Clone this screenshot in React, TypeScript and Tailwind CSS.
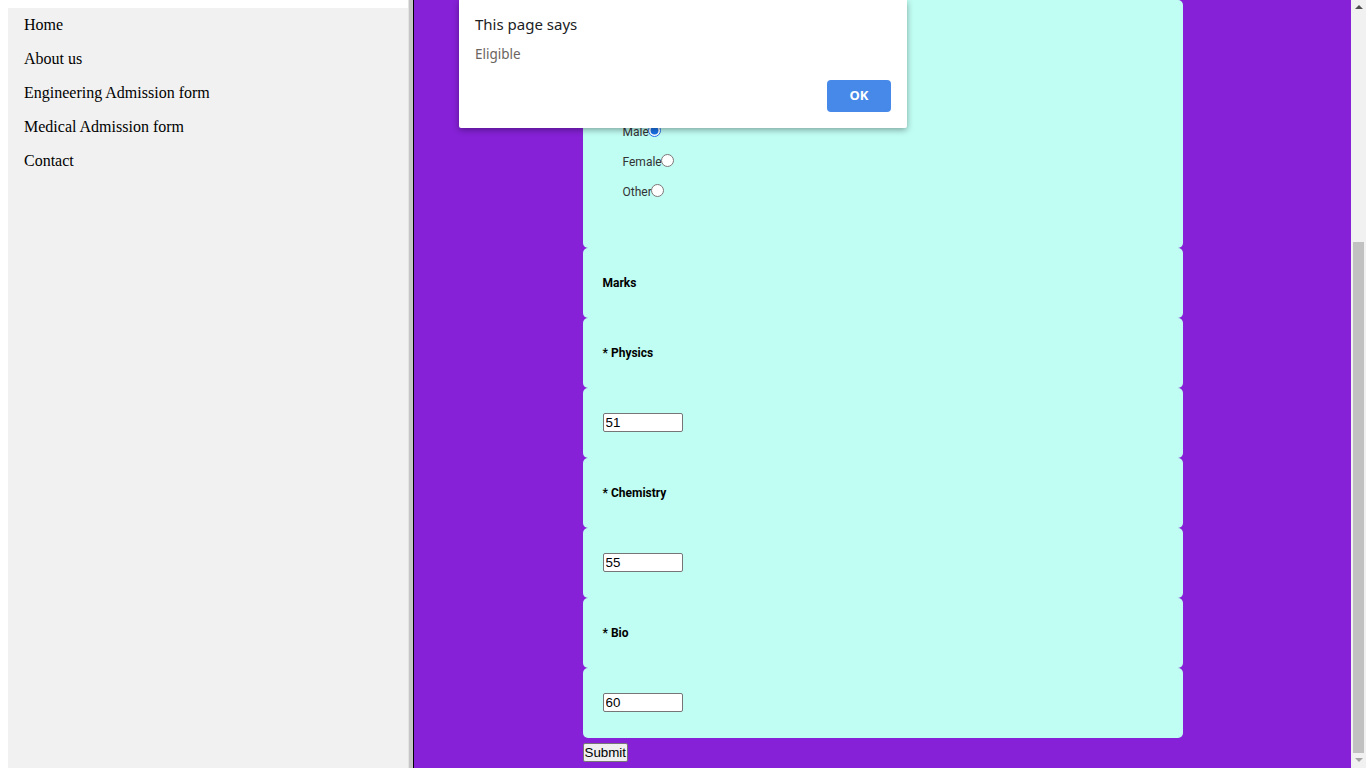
import React from "react";

const navItems = ["Home", "About us", "Engineering Admission form", "Medical Admission form", "Contact"];

function Row({ children }: { children: React.ReactNode }) {
  return (
    <div className="h-[70px] rounded-[5px] bg-[#c0fdf3] px-5 flex items-center">{children}</div>
  );
}

function Label({ text }: { text: string }) {
  return (
    <span className="text-[12px] font-bold text-black [font-family:Roboto,'Liberation_Sans',sans-serif]">{text}</span>
  );
}

function TextInput({ value }: { value: string }) {
  return (
    <input
      type="text"
      readOnly
      value={value}
      className="w-[80px] h-[19px] -mt-px border border-[#767676] rounded-[2px] bg-white px-[2px] text-[13.33px] text-black [font-family:'Liberation_Sans',Arial,sans-serif] outline-none"
    />
  );
}

function Radio({ label, checked }: { label: string; checked?: boolean }) {
  return (
    <div className="h-[30px] flex items-center">
      <span className="text-[12px] text-[#333] [font-family:Roboto,'Liberation_Sans',sans-serif]">{label}</span>
      <input type="radio" name="gender" readOnly checked={!!checked} className="w-[13px] h-[13px] m-0 -mt-[3px] -ml-px accent-[#1a73e8]" />
    </div>
  );
}

export default function App() {
  return (
    <div className="relative w-[1366px] h-[768px] flex overflow-hidden bg-white">
      {/* Left frame */}
      <div className="w-[408px] shrink-0 pt-2 pl-2">
        <nav className="h-full bg-[#f1f1f1] [font-family:'Liberation_Serif','Times_New_Roman',serif] text-[16px] text-black">
          {navItems.map((t) => (
            <div key={t} className="h-[34px] px-4 flex items-center">
              {t}
            </div>
          ))}
        </nav>
      </div>

      {/* Frame border */}
      <div className="flex shrink-0">
        <div className="w-px bg-[#e4e4e4]" />
        <div className="w-[4px] bg-[#c6c6c6]" />
        <div className="w-px bg-black" />
      </div>

      {/* Right frame */}
      <div className="flex-1 flex bg-[#8621d7]">
        <main className="flex-1 flex flex-col">
          <div className="mx-auto w-[600px]">
            <div className="h-[248px] rounded-[5px] bg-[#c0fdf3] pl-10 pb-[41px] flex flex-col justify-end">
              <Radio label="Male" checked />
              <Radio label="Female" />
              <Radio label="Other" />
            </div>
            <Row>
              <Label text="Marks" />
            </Row>
            <Row>
              <Label text="* Physics" />
            </Row>
            <Row>
              <TextInput value="51" />
            </Row>
            <Row>
              <Label text="* Chemistry" />
            </Row>
            <Row>
              <TextInput value="55" />
            </Row>
            <Row>
              <Label text="* Bio" />
            </Row>
            <Row>
              <TextInput value="60" />
            </Row>
            <button className="mt-[5px] h-[19px] px-[1px] bg-[#efefef] border border-[#767676] rounded-[2px] text-[13.33px] text-black leading-none [font-family:'Liberation_Sans',Arial,sans-serif]">
              Submit
            </button>
          </div>
        </main>

        {/* Scrollbar */}
        <div className="w-[15px] shrink-0 bg-[#f1f1f1] flex flex-col items-center">
          <div className="h-[15px] flex items-center justify-center">
            <svg width="8" height="5" viewBox="0 0 8 5">
              <polygon points="4,0 8,4 0,4" fill="#505050" />
            </svg>
          </div>
          <div className="flex-1 w-full px-[2px] flex flex-col">
            <div className="h-[227px]" />
            <div className="h-[511px] w-[11px] bg-[#c1c1c1]" />
          </div>
          <div className="h-[15px] flex items-center justify-center">
            <svg width="8" height="5" viewBox="0 0 8 5">
              <polygon points="0,0 8,0 4,4" fill="#a3a3a3" />
            </svg>
          </div>
        </div>
      </div>

      {/* Alert dialog */}
      <div className="absolute left-[459px] top-0 w-[448px] h-[128px] bg-white rounded-b-[2px] shadow-[0_2px_6px_rgba(0,0,0,0.35)] px-4 [font-family:'Noto_Sans','Open_Sans',sans-serif]">
        <div className="pt-[13px] text-[15px] text-[#202124] leading-[22px]">This page says</div>
        <div className="mt-[9px] text-[13.5px] text-[#6b6460] leading-[20px]">Eligible</div>
        <div className="absolute right-4 bottom-4 w-[64px] h-[32px] rounded-[4px] bg-[#4689e8] flex items-center justify-center text-[13px] font-bold text-white">
          OK
        </div>
      </div>
    </div>
  );
}
